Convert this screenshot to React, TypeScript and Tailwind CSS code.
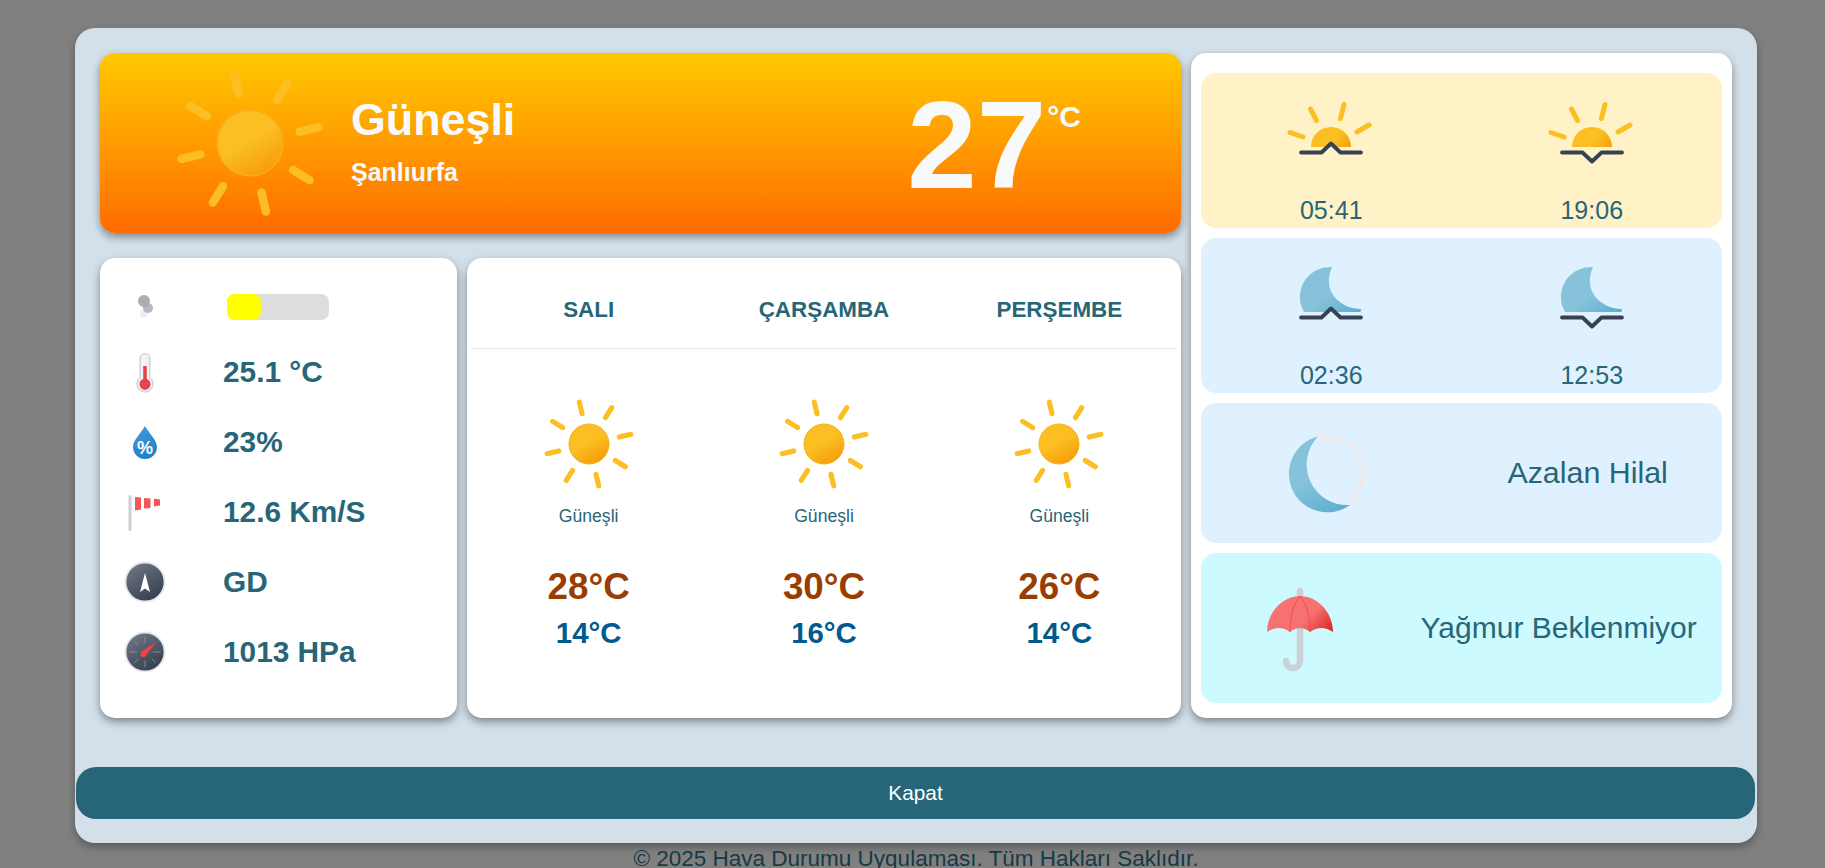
import React from 'react';

const rayPath =
  'M32 15.71V9.5m0 45v-6.21m11.52-27.8 4.39-4.39M16.09 47.91l4.39-4.39m0-23-4.39-4.39m31.82 31.78-4.39-4.39M15.71 32H9.5m45 0h-6.21';

function SunIcon({ className }: { className: string }) {
  return (
    <svg viewBox="0 0 64 64" className={className}>
      <defs>
        <linearGradient id="sunFill" x1="26.75" y1="22.91" x2="37.25" y2="41.09" gradientUnits="userSpaceOnUse">
          <stop offset="0" stopColor="#fbbf24" />
          <stop offset="0.45" stopColor="#fbbf24" />
          <stop offset="1" stopColor="#f59e0b" />
        </linearGradient>
      </defs>
      <circle cx="32" cy="32" r="10.5" fill="url(#sunFill)" stroke="#f8af18" strokeWidth="0.5" />
      <path d={rayPath} fill="none" stroke="#fbbf24" strokeWidth="2.7" strokeLinecap="round" transform="rotate(-13 32 32)" />
    </svg>
  );
}

function Horizon({ up, bg }: { up: boolean; bg: string }) {
  return (
    <path
      d={up ? 'M30 79.500H50.500L60 70.500L69.500 79.500H90' : 'M30 79.500H50.500L60 88.500L69.500 79.500H90'}
      fill={up ? bg : 'none'}
      stroke="#374151"
      strokeWidth="3.8"
      strokeLinecap="round"
      strokeLinejoin="round"
    />
  );
}

function SunEventIcon({ up }: { up: boolean }) {
  return (
    <svg viewBox="0 0 120 120" className="w-[120px] h-[120px]">
      <defs>
        <linearGradient id="halfSun" x1="45" y1="54" x2="75" y2="80" gradientUnits="userSpaceOnUse">
          <stop offset="0" stopColor="#fbbf24" />
          <stop offset="0.55" stopColor="#fbbf24" />
          <stop offset="1" stopColor="#f59e0b" />
        </linearGradient>
      </defs>
      <path d="M40 74A20 20 0 0 1 80 74Z" fill="url(#halfSun)" />
      <path
        d="M39.500 36L45.500 47.500M73 31.500L69.500 45.500M98 52L86 59M19 59.500L32 64"
        stroke="#fbbf24"
        strokeWidth="5"
        strokeLinecap="round"
      />
      <Horizon up={up} bg="#fff2c6" />
    </svg>
  );
}

function MoonEventIcon({ up }: { up: boolean }) {
  return (
    <svg viewBox="0 0 120 120" className="w-[120px] h-[120px]">
      <defs>
        <linearGradient id="moonFill" x1="45" y1="35" x2="78" y2="80" gradientUnits="userSpaceOnUse">
          <stop offset="0" stopColor="#86c3db" />
          <stop offset="0.45" stopColor="#86c3db" />
          <stop offset="1" stopColor="#5eafcf" />
        </linearGradient>
      </defs>
      <path d="M61 29A30 30 0 0 0 33 74H89.500L90 71C70 71 50 54 61 29Z" fill="url(#moonFill)" />
      <Horizon up={up} bg="#dff1ff" />
    </svg>
  );
}

function MoonPhaseIcon() {
  return (
    <svg viewBox="0 0 144 144" className="w-[144px] h-[144px]">
      <defs>
        <linearGradient id="phaseFill" x1="45" y1="40" x2="85" y2="108" gradientUnits="userSpaceOnUse">
          <stop offset="0" stopColor="#86c3db" />
          <stop offset="0.45" stopColor="#86c3db" />
          <stop offset="1" stopColor="#5eafcf" />
        </linearGradient>
      </defs>
      <g transform="translate(2 0)">
        <path d="M61 35.500A38.500 38.500 0 1 0 93 104A40.500 40.500 0 0 1 61 35.500Z" fill="url(#phaseFill)" />
        <path
          d="M64 35.500A37 37 0 0 1 91 102"
          fill="none"
          stroke="#f0e9e9"
          strokeWidth="5"
          strokeLinecap="round"
          strokeDasharray="5.500 8.700"
        />
      </g>
    </svg>
  );
}

function UmbrellaIcon() {
  return (
    <svg viewBox="0 0 144 144" className="w-[144px] h-[144px]">
      <defs>
        <linearGradient id="canopy" x1="50" y1="38" x2="96" y2="82" gradientUnits="userSpaceOnUse">
          <stop offset="0" stopColor="#f87171" />
          <stop offset="0.6" stopColor="#f87171" />
          <stop offset="1" stopColor="#dc2626" />
        </linearGradient>
      </defs>
      <g transform="translate(2 0)">
        <path
          d="M72 35V105A7 7 0 0 1 58 105"
          fill="none"
          stroke="#cbcfd6"
          strokeWidth="6.500"
          strokeLinecap="round"
        />
        <path
          d="M39 76C39 56 55 40 72 40C89 40 105 56 105 76Q93 68 82 76Q72 68 62 76Q51 68 39 76Z"
          fill="url(#canopy)"
        />
        <path d="M72 40C64 50 62 64 62 76M72 40C80 50 82 64 82 76" fill="none" stroke="#ef4444" strokeWidth="0.8" />
      </g>
    </svg>
  );
}

function SmokeIcon() {
  return (
    <svg viewBox="0 0 60 50" className="w-[60px] h-[50px]">
      <circle cx="29" cy="31.500" r="4" fill="#eceef0" />
      <circle cx="33" cy="26" r="5" fill="#b4b8c0" />
      <circle cx="29" cy="19" r="6" fill="#a8adb6" />
    </svg>
  );
}

function ThermometerIcon() {
  return (
    <svg viewBox="0 0 60 60" className="w-[60px] h-[60px]">
      <path
        d="M25.200 16.500A4.800 4.800 0 0 1 34.800 16.500V35.500A8 8 0 1 1 25.200 35.500Z"
        fill="#f5f5f7"
        stroke="#cfd2d8"
        strokeWidth="1.500"
      />
      <path d="M28.200 24H31.800V37A5.600 5.600 0 1 1 28.200 37Z" fill="#e5434b" />
      <path d="M31 16H34M31 20H34M31 24H34" stroke="#dcdfe3" strokeWidth="0.800" />
    </svg>
  );
}

function DropIcon() {
  return (
    <svg viewBox="0 0 60 60" className="w-[60px] h-[60px]">
      <defs>
        <linearGradient id="dropFill" x1="24" y1="14" x2="36" y2="46" gradientUnits="userSpaceOnUse">
          <stop offset="0" stopColor="#3f9cdc" />
          <stop offset="1" stopColor="#1f7fc4" />
        </linearGradient>
      </defs>
      <path d="M30 14C33 20 42 28 42 35A12 12 0 0 1 18 35C18 28 27 20 30 14Z" fill="url(#dropFill)" />
      <text x="30" y="41.500" textAnchor="middle" fontSize="18" fontWeight="700" fill="#ffffff" fontFamily="Liberation Sans">
        %
      </text>
    </svg>
  );
}

function WindsockIcon() {
  return (
    <svg viewBox="0 0 60 60" className="w-[60px] h-[60px]">
      <rect x="13.500" y="13" width="3" height="36" rx="1.500" fill="#cdd0d7" />
      <path d="M20 15L26 15.500V27.500L20 28.500Z" fill="#f1565a" />
      <path d="M29 16L35.500 16.500V26L29 26.500Z" fill="#f1585c" />
      <path d="M39 16.500L45 17.500V23.500L39 24.500Z" fill="#f1565a" />
    </svg>
  );
}

function CompassIcon() {
  return (
    <svg viewBox="0 0 60 60" className="w-[60px] h-[60px]">
      <defs>
        <linearGradient id="dial" x1="20" y1="14" x2="40" y2="46" gradientUnits="userSpaceOnUse">
          <stop offset="0" stopColor="#6b7280" />
          <stop offset="1" stopColor="#374151" />
        </linearGradient>
      </defs>
      <circle cx="30" cy="30" r="19.500" fill="url(#dial)" stroke="#e5e7eb" strokeWidth="1.800" />
      <path d="M30 21L35 40L30 36.500L25 40Z" fill="#ffffff" />
    </svg>
  );
}

function GaugeIcon() {
  return (
    <svg viewBox="0 0 60 60" className="w-[60px] h-[60px]">
      <circle cx="30" cy="30" r="19.500" fill="url(#dial)" stroke="#e5e7eb" strokeWidth="1.800" />
      <path
        d="M30 15V21M15 30H22M38 30H45M30 39V45M19.500 19.500L23 23M37 37L40.500 40.500M19.500 40.500L23 37"
        stroke="#8a909b"
        strokeWidth="0.900"
        strokeLinecap="round"
      />
      <path d="M41.500 20L31 33L27 29Z" fill="#ef4444" />
      <circle cx="28.500" cy="32" r="3" fill="#ef4444" />
    </svg>
  );
}

const stats = [
  { icon: <ThermometerIcon />, value: '25.1 °C' },
  { icon: <DropIcon />, value: '23%' },
  { icon: <WindsockIcon />, value: '12.6 Km/S' },
  { icon: <CompassIcon />, value: 'GD' },
  { icon: <GaugeIcon />, value: '1013 HPa' },
];

const forecast = [
  { day: 'SALI', high: '28°C', low: '14°C' },
  { day: 'ÇARŞAMBA', high: '30°C', low: '16°C' },
  { day: 'PERŞEMBE', high: '26°C', low: '14°C' },
];

export default function App() {
  return (
    <div className="h-[868px] overflow-hidden bg-[#808080] font-['Liberation_Sans',Arial,sans-serif] text-[#276678]">
      <div className="ml-[75px] w-[1682px] pt-[28px]">
        <div className="bg-[#d3e0ea] rounded-[20px] h-[815px] shadow-[0_4px_8px_rgba(0,0,0,0.3)]">
          <div className="flex gap-[10px] px-[25px] pt-[25px]">
            <div className="w-[1081px] shrink-0">
              {/* Güncel durum */}
              <div className="h-[180px] rounded-[15px] flex items-center pl-[50px] pr-[100px] text-[#f8f9fb] bg-gradient-to-b from-[#ffc800] to-[#ff6a00] shadow-[0_4px_8px_rgba(0,0,0,0.4)]">
                <SunIcon className="w-[200px] h-[200px] shrink-0" />
                <div className="ml-[1px] mb-[5px] flex flex-col">
                  <div className="text-[44.8px] leading-[51px] font-bold">Güneşli</div>
                  <div className="text-[25px] leading-[29px] font-bold mt-[13px]">Şanlıurfa</div>
                </div>
                <div className="ml-auto flex items-start">
                  <div className="text-[125px] leading-[138px] font-bold mt-[3px]">27</div>
                  <div className="text-[30px] leading-[34px] font-bold mt-[27px] ml-[1px]">°C</div>
                </div>
              </div>

              <div className="flex gap-[10px] mt-[25px] h-[460px]">
                {/* Hava detayları */}
                <div className="w-[357px] shrink-0 bg-white rounded-[15px] pt-[24px] pl-[15px] flex flex-col gap-[10px] shadow-[0_4px_8px_rgba(0,0,0,0.4)]">
                  <div className="h-[50px] flex items-center">
                    <SmokeIcon />
                    <div className="ml-[52px] w-[102px] h-[26px] rounded-[8px] bg-[#dddddd]">
                      <div className="w-[34px] h-full rounded-[8px] bg-[#ffff00]"></div>
                    </div>
                  </div>
                  {stats.map(stat => (
                    <div key={stat.value} className="h-[60px] flex items-center">
                      {stat.icon}
                      <div className="ml-[48px] text-[29.8px] font-bold">{stat.value}</div>
                    </div>
                  ))}
                </div>

                {/* Üç günlük tahmin */}
                <div className="flex-1 bg-white rounded-[15px] px-[4px] shadow-[0_4px_8px_rgba(0,0,0,0.4)]">
                  <div className="h-[91px] grid grid-cols-3 items-center pt-[13px] border-b border-[#e3e8ec]">
                    {forecast.map(item => (
                      <div key={item.day} className="text-center text-[22.4px] font-bold">
                        {item.day}
                      </div>
                    ))}
                  </div>
                  <div className="grid grid-cols-3 pt-[34px]">
                    {forecast.map(item => (
                      <div key={item.day} className="flex flex-col items-center">
                        <SunIcon className="w-[122px] h-[122px]" />
                        <div className="mt-[1px] text-[17.6px] leading-[20px]">Güneşli</div>
                        <div className="mt-[40px] text-[36.8px] leading-[41px] font-bold text-[#993d00]">{item.high}</div>
                        <div className="mt-[9px] text-[29.4px] leading-[33px] font-bold text-[#005a8d]">{item.low}</div>
                      </div>
                    ))}
                  </div>
                </div>
              </div>
            </div>

            {/* Gün doğumu, ay ve yağış */}
            <div className="flex-1 bg-white rounded-[15px] px-[10px] pt-[20px] flex flex-col gap-[10px] h-[665px] shadow-[0_4px_8px_rgba(0,0,0,0.4)]">
              <div className="h-[155px] rounded-[15px] bg-[#fff2c6] grid grid-cols-2">
                <div className="flex flex-col items-center">
                  <SunEventIcon up={true} />
                  <div className="mt-[3px] text-[25px] leading-[28px]">05:41</div>
                </div>
                <div className="flex flex-col items-center">
                  <SunEventIcon up={false} />
                  <div className="mt-[3px] text-[25px] leading-[28px]">19:06</div>
                </div>
              </div>
              <div className="h-[155px] rounded-[15px] bg-[#dff1ff] grid grid-cols-2">
                <div className="flex flex-col items-center">
                  <MoonEventIcon up={true} />
                  <div className="mt-[3px] text-[25px] leading-[28px]">02:36</div>
                </div>
                <div className="flex flex-col items-center">
                  <MoonEventIcon up={false} />
                  <div className="mt-[3px] text-[25px] leading-[28px]">12:53</div>
                </div>
              </div>
              <div className="h-[140px] rounded-[15px] bg-[#dff1ff] flex items-center justify-around">
                <MoonPhaseIcon />
                <div className="text-[30.4px]">Azalan Hilal</div>
              </div>
              <div className="h-[150px] rounded-[15px] bg-[#ccfaff] flex items-center justify-around">
                <UmbrellaIcon />
                <div className="text-[30px] -mt-[1px]">Yağmur Beklenmiyor</div>
              </div>
            </div>
          </div>

          <button className="block mt-[49px] ml-[1px] w-[1679px] h-[52px] rounded-[20px] bg-[#276678] text-white text-[20.8px]">
            Kapat
          </button>
        </div>
        <div className="text-center text-[22.5px] leading-[25px] mt-[3px] text-[#163a46]">
          © 2025 Hava Durumu Uygulaması. Tüm Hakları Saklıdır.
        </div>
      </div>
    </div>
  );
}
